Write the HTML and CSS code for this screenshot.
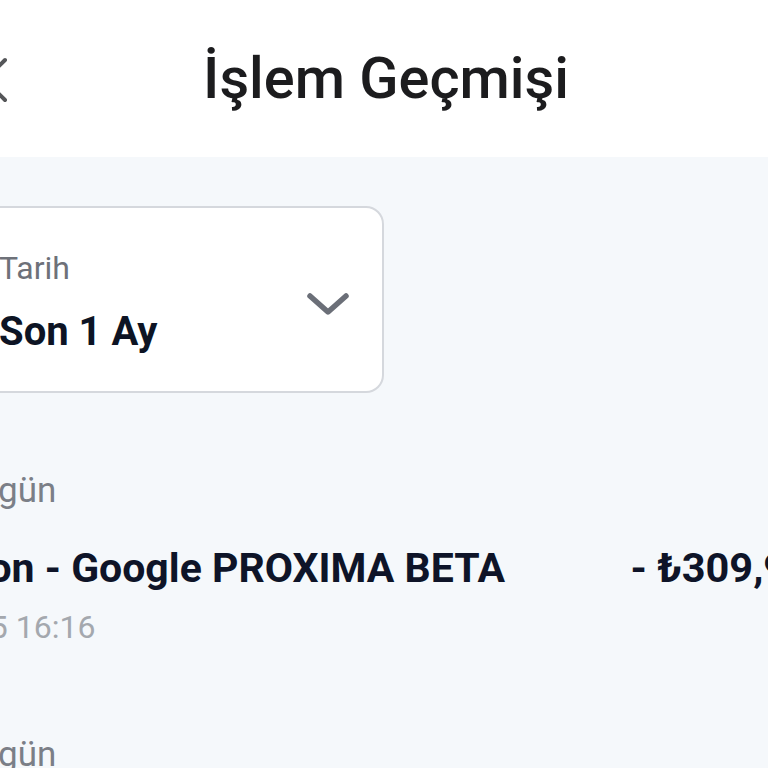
FILE: index.html
```html
<!DOCTYPE html>
<html lang="tr">
<head>
<meta charset="utf-8">
<title>İşlem Geçmişi</title>
<link rel="stylesheet" href="styles.css">
</head>
<body>
<div class="screen">
  <header class="topbar">
    <button class="close" aria-label="Kapat">
      <svg width="46" height="46" viewBox="0 0 46 46"><path d="M3 3 L43 43 M43 3 L3 43" fill="none" stroke="#555659" stroke-width="4" stroke-linecap="round"/></svg>
    </button>
    <h1 class="title">İşlem Geçmişi</h1>
    <span></span>
  </header>
  <main class="content">
    <div class="filter-card">
      <div class="filter-text">
        <span class="filter-label">Tarih</span>
        <span class="filter-value">Son 1 Ay</span>
      </div>
      <svg class="chevron" width="48" height="30" viewBox="0 0 48 30"><polyline points="6,7 24,23 42,7" fill="none" stroke="#6b6f78" stroke-width="5.5" stroke-linecap="round" stroke-linejoin="round"/></svg>
    </div>

    <section class="day">
      <h2 class="day-title">Bugün</h2>
      <div class="tx">
        <div class="tx-main">
          <div class="tx-title">Provizyon - Google PROXIMA BETA</div>
          <div class="tx-date">24.03.2025 16:16</div>
        </div>
        <div class="tx-amount">- ₺309,99</div>
      </div>
    </section>

    <section class="day day-next">
      <h2 class="day-title">Bugün</h2>
      <div class="tx">
        <div class="tx-main">
          <div class="tx-title">Provizyon - Google PROXIMA BETA</div>
          <div class="tx-date">24.03.2025 12:40</div>
        </div>
        <div class="tx-amount">- ₺154,99</div>
      </div>
    </section>
  </main>
</div>
</body>
</html>
```
FILE: styles.css
```css
html, body {
  margin: 0;
  padding: 0;
  background: #f5f8fb;
  overflow: hidden;
  height: 768px;
}
body {
  font-family: Roboto, "Noto Sans", sans-serif;
}
.screen {
  margin-left: -180px;
  width: 1128px;
}
.topbar {
  height: 157px;
  background: #ffffff;
  display: grid;
  grid-template-columns: 1fr auto 1fr;
  align-items: center;
}
.close {
  justify-self: start;
  margin-left: 142px;
  padding: 0;
  border: 0;
  background: none;
  display: flex;
  margin-top: 2px;
}
.title {
  margin: 0 0 0 4px;
  font-size: 57.7px;
  font-weight: 500;
  line-height: 1;
  color: #1c1c1e;
}
.content {
  padding: 49px 137px 0 32px;
}
.filter-card {
  margin-left: 126px;
  width: 406px;
  height: 187px;
  box-sizing: border-box;
  border: 2px solid #d5d8dd;
  border-radius: 18px;
  background: #ffffff;
  display: flex;
  align-items: center;
  justify-content: space-between;
  padding: 0 30px 0 19px;
}
.filter-text {
  display: flex;
  flex-direction: column;
  margin-top: 5px;
}
.filter-label {
  font-size: 32px;
  line-height: 40px;
  color: #6e7179;
}
.filter-value {
  margin-top: 20px;
  font-size: 40px;
  line-height: 48px;
  font-weight: 700;
  color: #0d1424;
}
.chevron {
  margin-top: 9px;
}
.day-title {
  margin: 78px 0 0 105px;
  font-size: 35px;
  line-height: 40px;
  font-weight: 400;
  color: #7b7f87;
}
.day-next .day-title {
  margin-top: 88px;
}
.tx {
  margin-top: 33px;
  display: flex;
  justify-content: space-between;
  align-items: flex-start;
}
.tx-title {
  font-size: 41px;
  line-height: 48px;
  font-weight: 700;
  color: #0e1428;
}
.tx-date {
  margin: 15px 0 0 -5px;
  font-size: 32px;
  line-height: 40px;
  color: #a4a8ae;
}
.tx-amount {
  font-size: 41.5px;
  line-height: 48px;
  font-weight: 700;
  color: #0e1428;
  white-space: nowrap;
}
```
